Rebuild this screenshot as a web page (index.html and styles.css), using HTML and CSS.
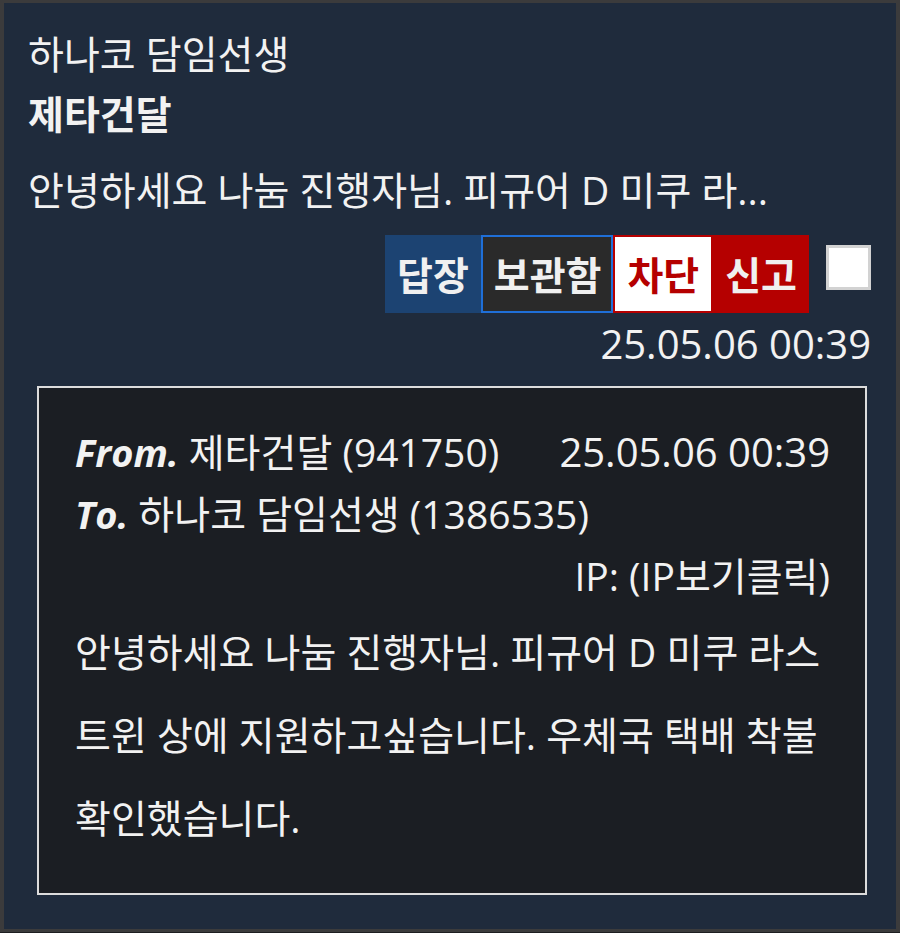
FILE: index.html
```html
<!DOCTYPE html>
<html lang="ko">
<head>
<meta charset="utf-8">
<title>쪽지</title>
<link rel="stylesheet" href="styles.css">
</head>
<body>
<div class="card">
  <div class="to-name">하나코 담임선생</div>
  <div class="from-name">제타건달</div>
  <div class="preview">안녕하세요 나눔 진행자님. 피규어 D 미쿠 라...</div>
  <div class="actions">
    <span class="btn btn-reply">답장</span>
    <span class="btn btn-keep">보관함</span>
    <span class="btn btn-block">차단</span>
    <span class="btn btn-report">신고</span>
    <span class="check"></span>
  </div>
  <div class="date">25.05.06 00:39</div>
  <div class="message">
    <div class="meta-row">
      <span><b class="label">From.</b> 제타건달 (941750)</span>
      <span class="n">25.05.06 00:39</span>
    </div>
    <div class="meta-row">
      <span><b class="label">To.</b> 하나코 담임선생 (1386535)</span>
    </div>
    <div class="meta-row ip">
      <span>IP: (IP보기클릭)</span>
    </div>
    <div class="body-text">안녕하세요 나눔 진행자님. 피규어 D 미쿠 라스트윈 상에 지원하고싶습니다. 우체국 택배 착불 확인했습니다.</div>
  </div>
</div>
</body>
</html>
```

FILE: styles.css
```css
html, body {
  margin: 0;
  padding: 0;
  background: #1d1e21;
}
body {
  width: 900px;
  height: 933px;
  overflow: hidden;
  font-family: "Open Sans", "Noto Sans CJK KR", sans-serif;
  font-size: 39px;
  color: #f2f2f2;
}
.card {
  box-sizing: border-box;
  width: 900px;
  height: 932px;
  background: #1f2b3c;
  border: 3px solid #3b3b3c;
  border-left-width: 4px;
  border-right-width: 4px;
  padding: 21px 25px 0 24px;
  display: flex;
  flex-direction: column;
}
.to-name,
.from-name,
.preview {
  line-height: 60px;
  white-space: nowrap;
}
.from-name {
  font-weight: 700;
}
.preview {
  margin-top: 16px;
}
.actions {
  margin-top: 15px;
  display: flex;
  justify-content: flex-end;
  align-items: flex-start;
}
.btn {
  box-sizing: border-box;
  height: 78px;
  display: flex;
  align-items: center;
  padding: 0 12px;
  font-weight: 700;
  line-height: 1;
  color: #f0f0f0;
}
.btn-reply {
  background: #1c4372;
}
.btn-keep {
  background: #2a2a2a;
  border: 2px solid #1f6fd8;
  padding: 0 10px 0 11px;
}
.btn-block {
  background: #ffffff;
  border: 2px solid #b50000;
  color: #b50000;
}
.btn-report {
  background: #b50000;
}
.check {
  box-sizing: border-box;
  width: 45px;
  height: 45px;
  margin: 10px 0 0 17px;
  background: #ffffff;
  border: 3px solid #d2d2d2;
}
.date {
  margin-top: 6px;
  text-align: right;
  font-size: 40px;
  line-height: 50px;
}
.message {
  box-sizing: border-box;
  margin: 17px 4px 0 9px;
  height: 509px;
  background: #1b1e23;
  border: 2px solid #dcdcdc;
  padding: 33px 35px 0 36px;
}
.meta-row {
  display: flex;
  justify-content: space-between;
  line-height: 62px;
  white-space: nowrap;
}
.meta-row.ip {
  justify-content: flex-end;
}
.label {
  font-style: italic;
  font-weight: 700;
  font-size: 38px;
}
.n {
  font-size: 40px;
}
.body-text {
  margin-top: 3px;
  line-height: 83px;
  word-break: break-all;
}
```
